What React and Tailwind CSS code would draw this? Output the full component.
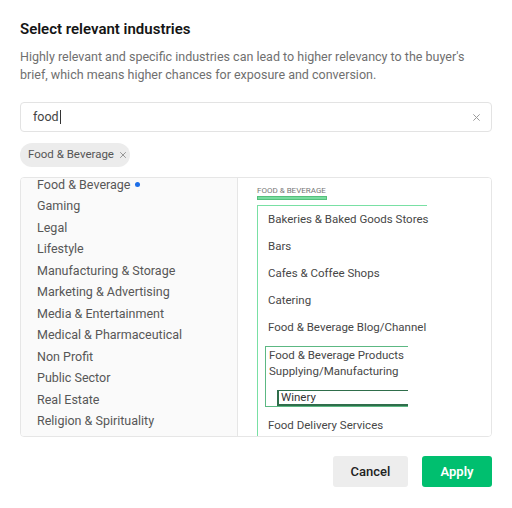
import React from "react";

const INDUSTRIES = [
  "Food & Beverage",
  "Gaming",
  "Legal",
  "Lifestyle",
  "Manufacturing & Storage",
  "Marketing & Advertising",
  "Media & Entertainment",
  "Medical & Pharmaceutical",
  "Non Profit",
  "Public Sector",
  "Real Estate",
  "Religion & Spirituality",
];

const SUB_TOP = [
  "Bakeries & Baked Goods Stores",
  "Bars",
  "Cafes & Coffee Shops",
  "Catering",
  "Food & Beverage Blog/Channel",
];

function XIcon({ className }) {
  return (
    <svg viewBox="0 0 10 10" className={className} fill="none" stroke="currentColor" strokeWidth="1.1">
      <path d="M1.5 1.5l7 7M8.5 1.5l-7 7" />
    </svg>
  );
}

export default function App() {
  return (
    <div className="w-[512px] h-[508px] bg-white px-5 pt-[19px] font-['Roboto',sans-serif]">
      <h2 className="text-[15px] leading-5 font-semibold text-[#151515]">
        Select relevant industries
      </h2>
      <p className="mt-[9px] text-[12.5px] leading-[18px] text-[#6f6f6f]">
        Highly relevant and specific industries can lead to higher relevancy to the buyer's brief,
        which means higher chances for exposure and conversion.
      </p>

      {/* search */}
      <div className="mt-[18px] h-[30px] flex items-center border border-[#e3e3e3] rounded-[4px] pl-3 pr-[10px]">
        <span className="text-[12.5px] text-[#444]">food</span>
        <span className="w-px h-[14px] bg-[#333] ml-px" />
        <XIcon className="ml-auto w-[9px] h-[9px] text-[#9a9a9a]" />
      </div>

      {/* selected chip */}
      <div className="mt-[11px] h-6 w-[110px] flex items-center gap-[5px] rounded-full bg-[#ececec] pl-2 text-[11.5px] text-[#555] whitespace-nowrap">
        <span>Food &amp; Beverage</span>
        <XIcon className="w-[8px] h-[8px] text-[#8a8a8a]" />
      </div>

      {/* picker */}
      <div className="mt-[10px] h-[260px] flex border border-[#e6e6e6] rounded-[4px] overflow-hidden">
        <div className="w-[217px] shrink-0 bg-[#fafafa] border-r border-[#e6e6e6] overflow-hidden">
          <ul className="-mt-[4px] pl-4 text-[12.5px] leading-[21.45px] text-[#575757]">
            {INDUSTRIES.map((name, i) => (
              <li key={name} className="flex items-center">
                {name}
                {i === 0 && <span className="ml-[5px] w-[5px] h-[5px] rounded-full bg-[#1c6ee8]" />}
              </li>
            ))}
          </ul>
        </div>

        <div className="flex-1 bg-white pl-[19px] pt-[8px] overflow-hidden">
          <div className="text-[8px] leading-[10px] text-[#777] whitespace-nowrap">
            FOOD &amp; BEVERAGE
          </div>
          <div className="w-[70px] h-[4px] bg-[#78dc9f] border border-[#55c07c]" />

          <div className="mt-[5px] w-[170px] h-[240px] border-l border-t border-b border-[#79e0a4] text-[11.5px] text-[#474747] whitespace-nowrap">
            <ul className="pl-[10px]">
              {SUB_TOP.map((name) => (
                <li key={name} className="h-[27px] flex items-center">
                  {name}
                </li>
              ))}
            </ul>
            <div className="mt-[5px] ml-[7px] w-[143px] border-l border-t border-b border-[#5cb883] pl-[3px] leading-4">
              <div>Food &amp; Beverage Products</div>
              <div>Supplying/Manufacturing</div>
              <div className="mt-[11px] ml-[8px] h-[16px] border-l-2 border-t border-b-2 border-[#2f6e4b] pl-[2px] leading-[13px] text-[#333]">
                Winery
              </div>
            </div>
            <div className="mt-[5px] pl-[10px] h-[27px] flex items-center">Food Delivery Services</div>
          </div>
        </div>
      </div>

      {/* actions */}
      <div className="mt-[19px] flex justify-end gap-[14px]">
        <button className="w-[75px] h-[31px] rounded-[3px] bg-[#ededed] text-[13px] font-medium text-[#222]">
          Cancel
        </button>
        <button className="w-[70px] h-[31px] rounded-[3px] bg-[#00bf6f] text-[13px] font-semibold text-white">
          Apply
        </button>
      </div>
    </div>
  );
}
